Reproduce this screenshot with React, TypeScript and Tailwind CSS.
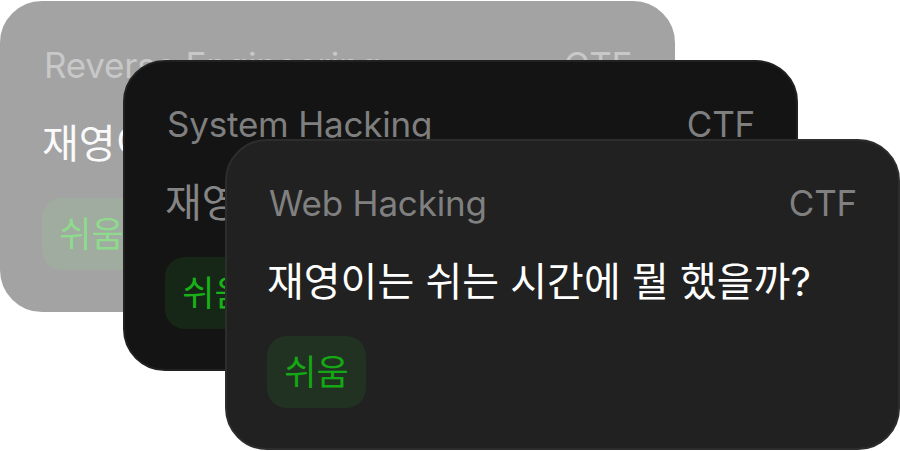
import React from "react";

type CardProps = {
  category: string;
  title: string;
  className: string;
  headerColor: string;
  titleColor: string;
  badgeBg: string;
  badgeText: string;
};

function Card({ category, title, className, headerColor, titleColor, badgeBg, badgeText }: CardProps) {
  return (
    <div className={`absolute w-[675px] h-[311px] rounded-[42px] border-2 pl-[40px] pr-[41px] pt-[41px] flex flex-col ${className}`}>
      <div className={`flex items-center justify-between pl-[2px] text-[35px] leading-[42px] tracking-[-0.2px] ${headerColor}`}>
        <span>{category}</span>
        <span>CTF</span>
      </div>
      <div className={`mt-[34px] text-[40px] leading-[48px] font-normal whitespace-nowrap ${titleColor}`}>{title}</div>
      <div className="mt-[30px] flex">
        <div className={`h-[72px] w-[99px] rounded-[20px] flex items-center justify-center text-[35px] leading-[40px] ${badgeBg} ${badgeText}`}>
          쉬움
        </div>
      </div>
    </div>
  );
}

export default function App() {
  return (
    <div
      className="relative w-[900px] h-[451px] bg-white overflow-hidden"
      style={{ fontFamily: 'Inter, "Noto Sans CJK KR", sans-serif' }}
    >
      <Card
        category="Reverse Engineering"
        title="재영이는 쉬는 시간에 뭘 했을까?"
        className="left-0 top-[1px] bg-[#a3a3a3] border-[#a3a3a3]"
        headerColor="text-[#c8c8c8]"
        titleColor="text-[#fafafa]"
        badgeBg="bg-[#a0aca0]"
        badgeText="text-[#8edb8e]"
      />
      <Card
        category="System Hacking"
        title="재영이는 쉬는 시간에 뭘 했을까?"
        className="left-[123px] top-[60px] bg-[#141414] border-[#212121]"
        headerColor="text-[#7f7f7f]"
        titleColor="text-[#858585]"
        badgeBg="bg-[#172717]"
        badgeText="text-[#18b218]"
      />
      <Card
        category="Web Hacking"
        title="재영이는 쉬는 시간에 뭘 했을까?"
        className="left-[225px] top-[139px] bg-[#212121] border-[#2d2d2d]"
        headerColor="text-[#808080]"
        titleColor="text-white"
        badgeBg="bg-[#223222]"
        badgeText="text-[#14a814]"
      />
    </div>
  );
}
